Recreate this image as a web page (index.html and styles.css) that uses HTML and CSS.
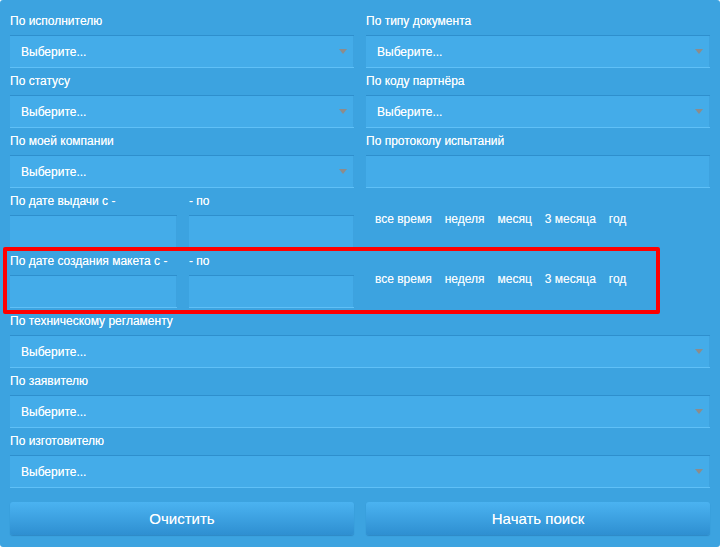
FILE: index.html
```html
<!DOCTYPE html>
<html lang="ru">
<head>
<meta charset="utf-8">
<link rel="stylesheet" href="styles.css">
</head>
<body>
<form class="panel">
  <div class="grid">
    <div class="field">
      <div class="label">По исполнителю</div>
      <div class="select"><span>Выберите...</span><i class="arrow"></i></div>
    </div>
    <div class="field">
      <div class="label">По типу документа</div>
      <div class="select"><span>Выберите...</span><i class="arrow"></i></div>
    </div>
    <div class="field">
      <div class="label">По статусу</div>
      <div class="select"><span>Выберите...</span><i class="arrow"></i></div>
    </div>
    <div class="field">
      <div class="label">По коду партнёра</div>
      <div class="select"><span>Выберите...</span><i class="arrow"></i></div>
    </div>
    <div class="field">
      <div class="label">По моей компании</div>
      <div class="select"><span>Выберите...</span><i class="arrow"></i></div>
    </div>
    <div class="field">
      <div class="label">По протоколу испытаний</div>
      <div class="input"></div>
    </div>

    <div class="field dates">
      <div class="date">
        <div class="label">По дате выдачи с -</div>
        <div class="input"></div>
      </div>
      <div class="date">
        <div class="label">- по</div>
        <div class="input"></div>
      </div>
    </div>
    <div class="field periods">
      <a>все время</a><a>неделя</a><a>месяц</a><a>3 месяца</a><a>год</a>
    </div>

    <div class="field dates">
      <div class="date">
        <div class="label">По дате создания макета с -</div>
        <div class="input"></div>
      </div>
      <div class="date">
        <div class="label">- по</div>
        <div class="input"></div>
      </div>
    </div>
    <div class="field periods">
      <a>все время</a><a>неделя</a><a>месяц</a><a>3 месяца</a><a>год</a>
    </div>

    <div class="field wide">
      <div class="label">По техническому регламенту</div>
      <div class="select"><span>Выберите...</span><i class="arrow"></i></div>
    </div>
    <div class="field wide">
      <div class="label">По заявителю</div>
      <div class="select"><span>Выберите...</span><i class="arrow"></i></div>
    </div>
    <div class="field wide">
      <div class="label">По изготовителю</div>
      <div class="select"><span>Выберите...</span><i class="arrow"></i></div>
    </div>

    <div class="buttons">
      <button type="button" class="btn">Очистить</button>
      <button type="button" class="btn">Начать поиск</button>
    </div>
  </div>
  <div class="highlight"></div>
</form>
</body>
</html>
```
FILE: styles.css
```css
html, body {
  margin: 0;
  padding: 0;
  background: #ffffff;
}
body {
  font-family: "Liberation Sans", Arial, sans-serif;
  font-size: 12px;
  color: #ffffff;
}
.panel {
  position: relative;
  width: 720px;
  height: 547px;
  box-sizing: border-box;
  background: #3ca3e0;
  border-radius: 3px;
  padding: 8px 10px 0 10px;
  margin: 0;
  text-shadow: 0 0 0.6px rgba(255, 255, 255, 0.7);
}
.grid {
  display: grid;
  grid-template-columns: 1fr 1fr;
  column-gap: 12px;
}
.field {
  height: 60px;
}
.wide {
  grid-column: 1 / 3;
}
.label {
  height: 27px;
  box-sizing: border-box;
  padding-top: 6px;
  line-height: 14px;
  white-space: nowrap;
}
.select, .input {
  position: relative;
  height: 33px;
  box-sizing: border-box;
  background: #44ace9;
  border-top: 1px solid #2e8fcd;
  border-bottom: 1px solid #5fc0f7;
  box-shadow: inset -1px 0 0 #3da2df;
  line-height: 32px;
  padding-left: 11px;
}
.arrow {
  position: absolute;
  right: 7px;
  top: 13px;
  width: 0;
  height: 0;
  border-left: 4px solid transparent;
  border-right: 4px solid transparent;
  border-top: 5px solid #8c8c8c;
}
.dates {
  display: grid;
  grid-template-columns: 167px 1fr;
  column-gap: 12px;
}
.periods {
  display: flex;
  gap: 13px;
  padding: 24px 0 0 9px;
  box-sizing: border-box;
  line-height: 14px;
}
.periods a {
  color: #f4faff;
}
.buttons {
  grid-column: 1 / 3;
  display: grid;
  grid-template-columns: 1fr 1fr;
  column-gap: 12px;
  margin-top: 14px;
}
.btn {
  height: 33px;
  border: none;
  border-radius: 3px;
  background: linear-gradient(to bottom, #4bb3f1, #2e8fd1);
  box-shadow: 0 1px 1px rgba(20, 90, 150, 0.35);
  color: #ffffff;
  font-family: "Liberation Sans", Arial, sans-serif;
  font-size: 15px;
  padding: 0;
  text-shadow: 0 0 0.6px rgba(255, 255, 255, 0.6);
}
.highlight {
  position: absolute;
  left: 3px;
  top: 247px;
  width: 657px;
  height: 67px;
  box-sizing: border-box;
  border: 4px solid #ff0000;
  border-radius: 2px;
}
```
